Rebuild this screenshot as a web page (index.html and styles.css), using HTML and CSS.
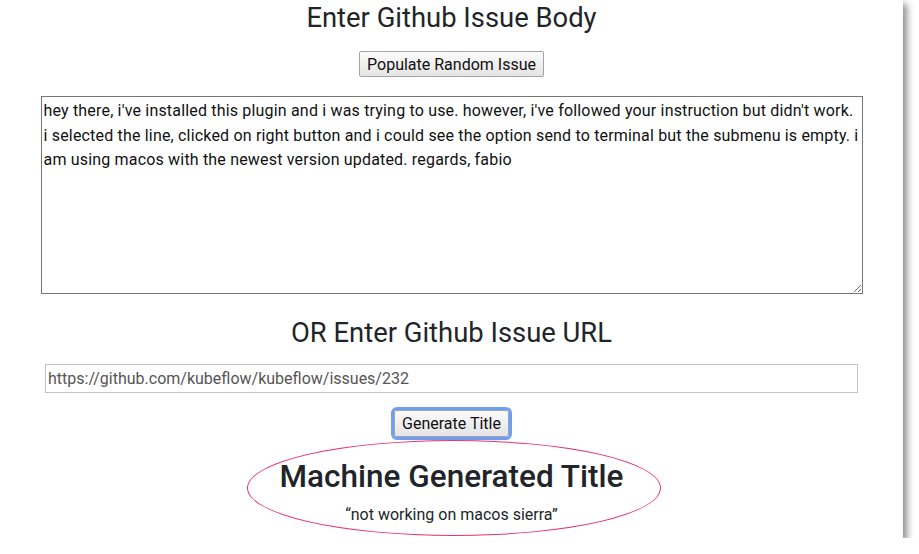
FILE: index.html
```html
<!DOCTYPE html>
<html>
<head>
<meta charset="utf-8">
<link rel="stylesheet" href="styles.css">
</head>
<body>
<div class="window">
  <main class="page">
    <h3 class="heading">Enter Github Issue Body</h3>
    <button class="btn btn-populate" type="button">Populate Random Issue</button>
    <textarea class="issue-body">hey there, i've installed this plugin and i was trying to use. however, i've followed your instruction but didn't work. i selected the line, clicked on right button and i could see the option send to terminal but the submenu is empty. i am using macos with the newest version updated. regards, fabio</textarea>
    <h3 class="heading heading-or">OR Enter Github Issue URL</h3>
    <input class="issue-url" type="text" value="https://github.com/kubeflow/kubeflow/issues/232">
    <button class="btn btn-generate" type="button">Generate Title</button>
    <section class="result">
      <h2 class="result-title">Machine Generated Title</h2>
      <p class="result-text">“not working on macos sierra”</p>
      <div class="highlight"></div>
    </section>
  </main>
</div>
</body>
</html>
```
FILE: styles.css
```css
html, body {
  margin: 0;
  padding: 0;
  background: #ffffff;
}
body {
  font-family: Roboto, "Liberation Sans", sans-serif;
  color: #212529;
}
.window {
  width: 903px;
  height: 538px;
  background: #ffffff;
  box-shadow: 4px 4px 7px rgba(0, 0, 0, 0.45);
  overflow: hidden;
}
.page {
  display: flex;
  flex-direction: column;
  align-items: center;
}
.heading {
  margin: 1px 0 0 0;
  font-size: 27.4px;
  line-height: 34px;
  font-weight: 400;
}
.heading-or {
  margin-top: 22px;
}
.btn {
  font-family: inherit;
  font-size: 16px;
  color: #111;
  background: linear-gradient(#fbfbfb, #e4e4e4);
  border: 1px solid #a3a3a3;
  border-radius: 2px;
  padding: 0 7px;
}
.btn-populate {
  margin-top: 16px;
  height: 26px;
}
.issue-body {
  margin-top: 19px;
  width: 822px;
  height: 198px;
  box-sizing: border-box;
  border: 1px solid #767676;
  padding: 2px 2px;
  font-family: inherit;
  font-size: 16px;
  letter-spacing: 0.18px;
  line-height: 24.5px;
  color: #111;
  resize: both;
}
.issue-url {
  margin-top: 14px;
  width: 813px;
  height: 29px;
  box-sizing: border-box;
  border: 1px solid #c4c4c4;
  padding: 0 2px;
  font-family: inherit;
  font-size: 16px;
  color: #555;
  outline: none;
}
.btn-generate {
  margin-top: 17px;
  height: 27px;
  outline: 3px solid #6e9ff5;
  outline-offset: 0;
  border-radius: 3px;
}
.result {
  position: relative;
  margin-top: 21px;
  text-align: center;
}
.result-title {
  margin: 0;
  font-size: 31.5px;
  line-height: 38px;
  font-weight: 500;
}
.result-text {
  margin: 7px 0 0 0;
  font-size: 16px;
  line-height: 24px;
}
.highlight {
  position: absolute;
  left: -33px;
  top: -18px;
  width: 414px;
  height: 96px;
  box-sizing: border-box;
  border: 1.5px solid #e8336f;
  border-radius: 50%;
}
```
